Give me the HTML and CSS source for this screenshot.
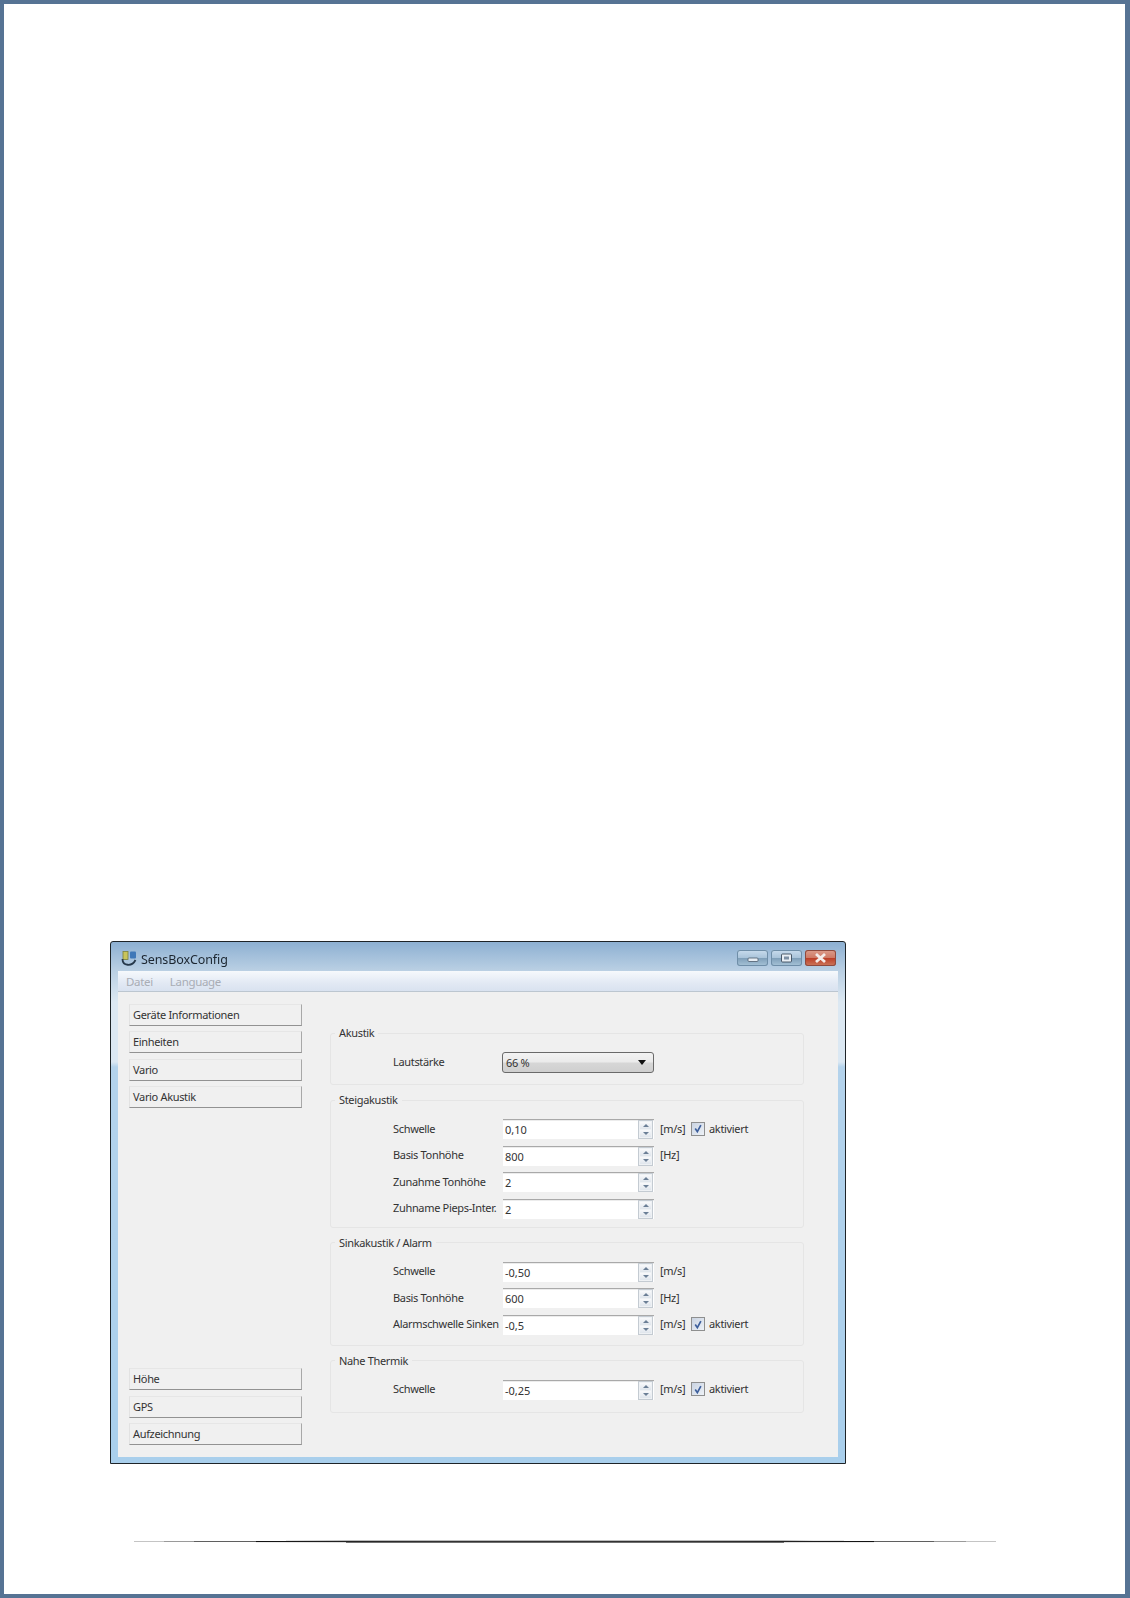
FILE: index.html
```html
<!DOCTYPE html>
<html lang="de">
<head>
<meta charset="utf-8">
<title>SensBoxConfig</title>
<link rel="stylesheet" href="styles.css">
</head>
<body>
<div class="page">
  <div class="window">
    <div class="titlebar">
      <svg class="app-icon" viewBox="0 0 16 16" width="16" height="16">
        <rect x="2" y="0.5" width="5" height="8" fill="#c9c45a" stroke="#7d8238" stroke-width="0.8"/>
        <rect x="9" y="0.5" width="6" height="7" rx="1" fill="#3f78b8"/>
        <path d="M1.5 8 C1.5 15 11 16 14.5 9" fill="none" stroke="#26384a" stroke-width="1.8"/>
      </svg>
      <span class="title">SensBoxConfig</span>
      <div class="caption">
        <div class="cap-btn">
          <svg viewBox="0 0 31 16" width="31" height="16"><rect x="11" y="8" width="10" height="3.5" rx="1" fill="#e8eef4" stroke="#4c5c6c" stroke-width="0.8"/></svg>
        </div>
        <div class="cap-btn">
          <svg viewBox="0 0 31 16" width="31" height="16"><rect x="10.5" y="4" width="10" height="8" rx="1" fill="#e8eef4" stroke="#3c4c5c" stroke-width="0.9"/><rect x="13" y="6.5" width="5" height="3" fill="#7d90a4"/></svg>
        </div>
        <div class="cap-btn cap-close">
          <svg viewBox="0 0 31 16" width="31" height="16"><path d="M11 4 L20 12 M20 4 L11 12" stroke="#f4ecea" stroke-width="2.8"/></svg>
        </div>
      </div>
    </div>
    <div class="frame">
      <div class="menubar">
        <span class="menu-item">Datei</span>
        <span class="menu-item">Language</span>
      </div>
      <div class="client">
        <nav class="sidebar">
          <div class="btn-stack">
            <div class="nav-btn">Geräte Informationen</div>
            <div class="nav-btn">Einheiten</div>
            <div class="nav-btn">Vario</div>
            <div class="nav-btn">Vario Akustik</div>
          </div>
          <div class="btn-stack">
            <div class="nav-btn">Höhe</div>
            <div class="nav-btn">GPS</div>
            <div class="nav-btn">Aufzeichnung</div>
          </div>
        </nav>
        <main class="panel">
          <fieldset class="group group-single">
            <legend>Akustik</legend>
            <div class="row">
              <span class="label">Lautstärke</span>
              <div class="combo"><span>66 %</span><i class="combo-arrow"></i></div>
            </div>
          </fieldset>

          <fieldset class="group group-steig">
            <legend>Steigakustik</legend>
            <div class="row">
              <span class="label">Schwelle</span>
              <div class="spin"><span class="value">0,10</span><div class="spin-btns"><b class="up"></b><b class="down"></b></div></div>
              <span class="unit">[m/s]</span>
              <span class="check"><svg viewBox="0 0 13 13" width="13" height="13"><path d="M3.5 6.5 L5.8 10 L9.6 2.8" fill="none" stroke="#3d5f9c" stroke-width="1.8"/></svg></span>
              <span class="check-label">aktiviert</span>
            </div>
            <div class="row">
              <span class="label">Basis Tonhöhe</span>
              <div class="spin"><span class="value">800</span><div class="spin-btns"><b class="up"></b><b class="down"></b></div></div>
              <span class="unit">[Hz]</span>
            </div>
            <div class="row">
              <span class="label">Zunahme Tonhöhe</span>
              <div class="spin"><span class="value">2</span><div class="spin-btns"><b class="up"></b><b class="down"></b></div></div>
            </div>
            <div class="row">
              <span class="label">Zuhname Pieps-Inter.</span>
              <div class="spin"><span class="value">2</span><div class="spin-btns"><b class="up"></b><b class="down"></b></div></div>
            </div>
          </fieldset>

          <fieldset class="group">
            <legend>Sinkakustik / Alarm</legend>
            <div class="row">
              <span class="label">Schwelle</span>
              <div class="spin"><span class="value">-0,50</span><div class="spin-btns"><b class="up"></b><b class="down"></b></div></div>
              <span class="unit">[m/s]</span>
            </div>
            <div class="row">
              <span class="label">Basis Tonhöhe</span>
              <div class="spin"><span class="value">600</span><div class="spin-btns"><b class="up"></b><b class="down"></b></div></div>
              <span class="unit">[Hz]</span>
            </div>
            <div class="row">
              <span class="label">Alarmschwelle Sinken</span>
              <div class="spin"><span class="value">-0,5</span><div class="spin-btns"><b class="up"></b><b class="down"></b></div></div>
              <span class="unit">[m/s]</span>
              <span class="check"><svg viewBox="0 0 13 13" width="13" height="13"><path d="M3.5 6.5 L5.8 10 L9.6 2.8" fill="none" stroke="#3d5f9c" stroke-width="1.8"/></svg></span>
              <span class="check-label">aktiviert</span>
            </div>
          </fieldset>

          <fieldset class="group group-single">
            <legend>Nahe Thermik</legend>
            <div class="row">
              <span class="label">Schwelle</span>
              <div class="spin"><span class="value">-0,25</span><div class="spin-btns"><b class="up"></b><b class="down"></b></div></div>
              <span class="unit">[m/s]</span>
              <span class="check"><svg viewBox="0 0 13 13" width="13" height="13"><path d="M3.5 6.5 L5.8 10 L9.6 2.8" fill="none" stroke="#3d5f9c" stroke-width="1.8"/></svg></span>
              <span class="check-label">aktiviert</span>
            </div>
          </fieldset>
        </main>
      </div>
    </div>
  </div>
  <div class="rule">
    <div class="rule-a"></div>
    <div class="rule-b"></div>
    <div class="rule-c"></div>
  </div>
</div>
</body>
</html>
```

FILE: styles.css
```css
* { box-sizing: border-box; }

html, body {
  margin: 0;
  padding: 0;
  background: #ffffff;
}

.page {
  width: 1130px;
  height: 1598px;
  border-style: solid;
  border-color: #567394;
  border-width: 4px 5px 4px 4px;
  background: #ffffff;
  padding: 937px 0 0 106px;
  font-family: "Noto Sans", "Open Sans", sans-serif;
  font-size: 11px;
  letter-spacing: -0.33px;
  color: #333333;
}

/* Window */
.window {
  width: 736px;
  height: 523px;
  border: 1px solid #1e2428;
  border-radius: 3px 3px 0 0;
  background: linear-gradient(to bottom, #8db0d2 0, #b9cfe3 28px, #dce8f2 60px, #dbe8f3 120px, #b4d3ec 125px, #a9cfec 100%);
  display: flex;
  flex-direction: column;
  filter: blur(0.45px);
}

.titlebar {
  height: 29px;
  display: flex;
  align-items: center;
  padding: 5px 9px 0 10px;
  flex: none;
}

.app-icon { flex: none; margin-top: -1px; }

.title {
  margin-left: 4px;
  font-size: 12.5px;
  color: #1c2630;
  letter-spacing: -0.1px;
}

.caption {
  margin-left: auto;
  margin-top: -3px;
  display: flex;
  gap: 3px;
}

.cap-btn {
  width: 31px;
  height: 16px;
  border-radius: 3px;
  box-shadow: inset 0 0 0 1px #6f8ea8;
  background: linear-gradient(to bottom, #c9dced 0, #aac4da 48%, #7f9fb9 52%, #a8c4d8 100%);
}

.cap-btn svg { display: block; }

.cap-close {
  box-shadow: inset 0 0 0 1px #8e4a3e;
  background: linear-gradient(to bottom, #dc9d8c 0, #cf7a66 48%, #bc3f28 52%, #cc7a5e 100%);
}

.frame {
  flex: 1;
  display: flex;
  flex-direction: column;
  padding: 0 7px 6px 7px;
  min-height: 0;
}

.menubar {
  height: 21px;
  flex: none;
  display: flex;
  align-items: center;
  gap: 17px;
  padding-left: 8px;
  background: linear-gradient(to bottom, #f6f9fc 0, #e2e9f4 60%, #d9e2f0 100%);
  border-bottom: 1px solid #bcc6d0;
}

.menu-item {
  color: #a9adb5;
  font-size: 11.5px;
}

.client {
  flex: 1;
  display: flex;
  background: #f0f0f0;
  min-height: 0;
}

/* Sidebar */
.sidebar {
  width: 184px;
  padding: 12px 0 12px 11px;
  display: flex;
  flex-direction: column;
  justify-content: space-between;
  flex: none;
}

.btn-stack {
  display: flex;
  flex-direction: column;
  gap: 5.4px;
}

.nav-btn {
  width: 173px;
  height: 22px;
  padding: 0 0 1px 3px;
  display: flex;
  align-items: center;
  background: #f0f0f0;
  border: 1px solid;
  border-color: #e6e6e6 #a8a8a8 #929292 #e2e2e2;
}

/* Panel */
.panel {
  margin-left: 28px;
  width: 474px;
  padding-top: 34px;
  display: flex;
  flex-direction: column;
  gap: 8px;
}

.group {
  margin: 0;
  min-width: 0;
  border: 1px solid #e5e5e5;
  border-radius: 3px;
  padding: 12px 0 10px 62px;
  display: flex;
  flex-direction: column;
  gap: 6.6px;
}

.group-single { padding-bottom: 12px; }
.group-steig { padding-bottom: 8px; }

.group legend {
  margin-left: -58px;
  padding: 0 4px;
  height: 14px;
  line-height: 14px;
}

.row {
  height: 20px;
  display: flex;
  align-items: center;
}

.label {
  width: 110px;
  flex: none;
  white-space: nowrap;
  position: relative;
  top: -1px;
}

.spin {
  width: 151px;
  height: 20px;
  flex: none;
  display: flex;
  background: #ffffff;
  border-top: 1px solid #a9a9a9;
  box-shadow: inset 0 1px 0 #ececec;
  position: relative;
}

.value {
  flex: 1;
  padding: 1px 0 0 2px;
  line-height: 18px;
  letter-spacing: 0;
}

.spin-btns {
  width: 15px;
  margin-right: 1px;
  display: flex;
  flex-direction: column;
  border: 1px solid #c4cbd2;
  background: #eef1f4;
  padding: 1px;
  gap: 1px;
}

.spin-btns b {
  flex: 1;
  display: flex;
  align-items: center;
  justify-content: center;
  background: linear-gradient(to bottom, #f8f9fb, #dfe5ec);
}

.spin-btns b::after {
  content: "";
  border-left: 3.5px solid transparent;
  border-right: 3.5px solid transparent;
}

.spin-btns .up::after { border-bottom: 3.5px solid #6b7f96; }
.spin-btns .down::after { border-top: 3.5px solid #6b7f96; }

.unit {
  margin-left: 6px;
  width: 31px;
  flex: none;
  white-space: nowrap;
  position: relative;
  top: -1px;
}

.check {
  flex: none;
  width: 14px;
  height: 14px;
  border: 1px solid #8e8f8f;
  background: linear-gradient(135deg, #c9d3e2, #eef2f7);
  display: flex;
  align-items: center;
  justify-content: center;
  margin-top: -1px;
}

.check-label {
  margin-left: 4px;
  white-space: nowrap;
  position: relative;
  top: -1px;
}

/* Combo */
.combo {
  width: 152px;
  height: 21px;
  flex: none;
  margin-left: -1px;
  display: flex;
  align-items: center;
  justify-content: space-between;
  padding: 0 7px 0 3px;
  border: 1px solid #6a6a6a;
  border-radius: 3px;
  background: linear-gradient(to bottom, #f3f3f3 0, #ebebeb 45%, #d6d6d6 55%, #cfcfcf 100%);
}

.combo-arrow {
  border-left: 4px solid transparent;
  border-right: 4px solid transparent;
  border-top: 5px solid #111111;
}

/* Bottom rule */
.rule {
  margin: 76px 0 0 24px;
  width: 862px;
  height: 3px;
  display: flex;
  flex-direction: column;
}

.rule div { height: 1px; }

.rule-a {
  background: linear-gradient(to right,
    transparent 0, transparent 152px,
    #e6e6e6 152px, #d2d2d2 182px, #bcbcbc 212px, #bcbcbc 650px, #e6e6e6 680px, #e6e6e6 710px, transparent 710px);
}

.rule-b {
  background: linear-gradient(to right,
    #c4c4c4 0, #c4c4c4 30px, #9a9a9a 30px, #9a9a9a 60px, #5f5f5f 60px, #5f5f5f 122px, #111 122px, #333 300px, #333 560px, #111 740px, #5f5f5f 740px, #5f5f5f 800px, #9a9a9a 800px, #9a9a9a 832px, #c4c4c4 832px, #c4c4c4 862px);
}

.rule-c {
  background: linear-gradient(to right,
    transparent 0, transparent 122px,
    #f0f0f0 122px, #dcdcdc 212px, #6e6e6e 212px, #6e6e6e 650px, #dcdcdc 650px, #f0f0f0 740px, transparent 740px);
}
```
